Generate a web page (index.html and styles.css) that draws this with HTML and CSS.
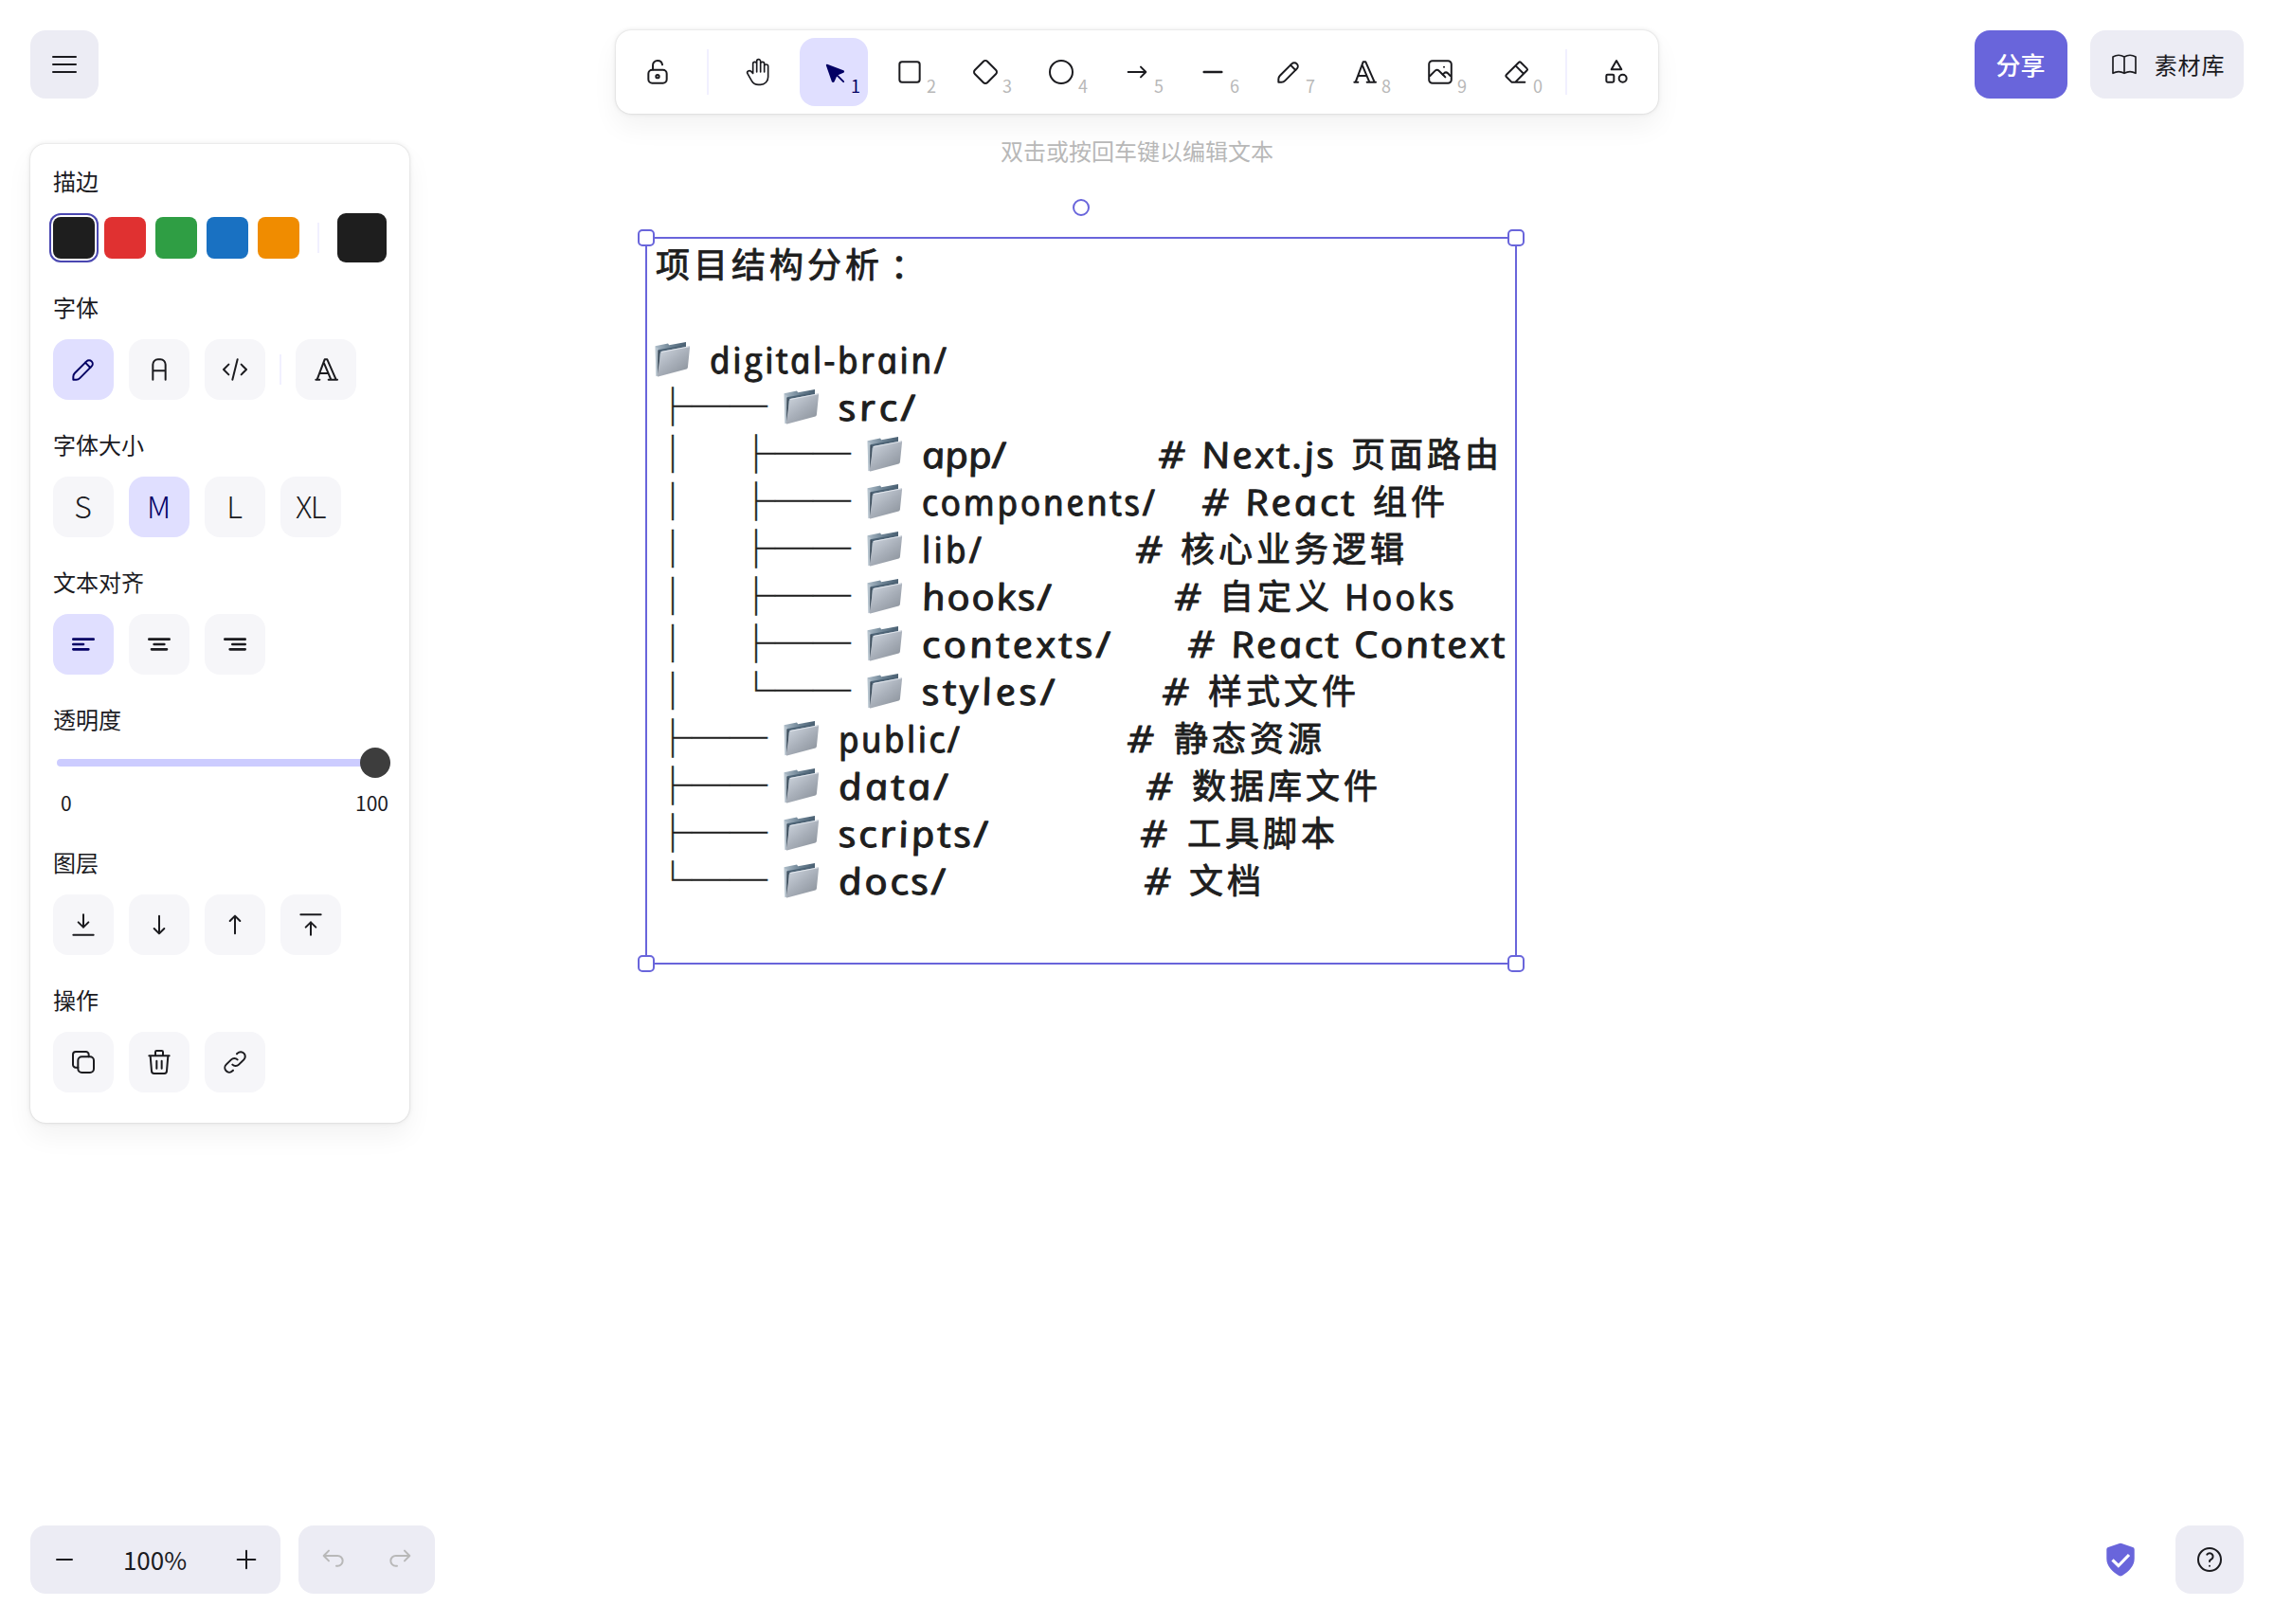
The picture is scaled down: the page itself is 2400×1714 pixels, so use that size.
FILE: index.html
```html
<!DOCTYPE html>
<html lang="zh-CN">
<head>
<meta charset="utf-8">
<title>Excalidraw</title>
<link rel="stylesheet" href="styles.css">
</head>
<body>
<svg class="canvas" viewBox="0 0 2400 1714">
  <defs>
    <linearGradient id="folder-front" x1="0" y1="0" x2="0.8" y2="1">
      <stop offset="0" stop-color="#d3dae3"/><stop offset="0.55" stop-color="#a9b0ba"/><stop offset="1" stop-color="#8c939c"/>
    </linearGradient>
    <linearGradient id="folder-back" x1="0" y1="0" x2="1" y2="0">
      <stop offset="0" stop-color="#aebdc9"/><stop offset="0.5" stop-color="#6d8394"/><stop offset="1" stop-color="#4a6072"/>
    </linearGradient>
    <symbol id="folder" viewBox="0 0 38 38" overflow="visible">
      <path d="M0.5 4.5 14 1.8l1.2 1.6L33 .2v5L6 34l-4.5 2.5Z" fill="url(#folder-back)"/>
      <path d="M1 5.5 3.6 7v28L1.8 36Z" fill="#b9c6d0"/>
      <path d="M3.4 8.5 33 3.2v3L5 12Z" fill="#4d6375"/>
      <path d="M3.4 9 5.5 10 4.5 34l-1.6 1Z" fill="#40505e"/>
      <path d="M6.3 11.6Q6.4 10.3 7.6 10L36 4.6q1.2-.2 1.1.9L34.9 27q-.1 1.2-1.3 1.6L3.6 36.6q-1 .2-.9-.9Z" fill="url(#folder-front)"/>
      <path d="M6.6 10.8 36.6 5" stroke="#e4e9ef" stroke-width=".9" fill="none"/>
    </symbol>
  </defs>

  <g class="cjk">
    <text x="692" y="293">项目结构分析</text>
    <text x="940" y="294">：</text>
    <text x="1426" y="493">页面路由</text>
    <text x="1449" y="543">组件</text>
    <text x="1246" y="593">核心业务逻辑</text>
    <text x="1287" y="643">自定义</text>
    <text x="1275" y="743">样式文件</text>
    <text x="1239" y="793">静态资源</text>
    <text x="1258" y="843">数据库文件</text>
    <text x="1253" y="893">工具脚本</text>
    <text x="1255" y="943">文档</text>
  </g>

  <g class="branch">
    <text x="690" y="444">├──</text>
    <text x="690" y="494">│</text><text x="778" y="494">├──</text>
    <text x="690" y="544">│</text><text x="778" y="544">├──</text>
    <text x="690" y="594">│</text><text x="778" y="594">├──</text>
    <text x="690" y="644">│</text><text x="778" y="644">├──</text>
    <text x="690" y="694">│</text><text x="778" y="694">├──</text>
    <text x="690" y="744">│</text><text x="778" y="744">└──</text>
    <text x="690" y="794">├──</text>
    <text x="690" y="844">├──</text>
    <text x="690" y="894">├──</text>
    <text x="690" y="944">└──</text>
  </g>

  <g transform="translate(0 0.8)">
    <use href="#folder" x="691" y="360" width="38" height="38"/>
    <use href="#folder" x="827" y="410" width="38" height="38"/>
    <use href="#folder" x="915" y="460" width="38" height="38"/>
    <use href="#folder" x="915" y="510" width="38" height="38"/>
    <use href="#folder" x="915" y="560" width="38" height="38"/>
    <use href="#folder" x="915" y="610" width="38" height="38"/>
    <use href="#folder" x="915" y="660" width="38" height="38"/>
    <use href="#folder" x="915" y="710" width="38" height="38"/>
    <use href="#folder" x="827" y="760" width="38" height="38"/>
    <use href="#folder" x="827" y="810" width="38" height="38"/>
    <use href="#folder" x="827" y="860" width="38" height="38"/>
    <use href="#folder" x="827" y="910" width="38" height="38"/>
  </g>

  <!-- Italic letterforms set upright: each label is skewed back around its own baseline -->
  <g class="latin" transform="translate(2 0)">
    <text transform="translate(749 394) skewX(12)" textLength="250">digital-brain/</text>
    <text transform="translate(885 444) skewX(12) scale(1.14 1)" textLength="71">src/</text>
    <text transform="translate(973 494) skewX(12) scale(1.14 1)" textLength="78">app/</text>
    <text transform="translate(973 544) skewX(12)" textLength="246">components/</text>
    <text transform="translate(973 594) skewX(12)" textLength="63">lib/</text>
    <text transform="translate(973 644) skewX(12) scale(1.14 1)" textLength="120">hooks/</text>
    <text transform="translate(973 694) skewX(12) scale(1.14 1)" textLength="174.5">contexts/</text>
    <text transform="translate(973 744) skewX(12) scale(1.14 1)" textLength="123">styles/</text>
    <text transform="translate(885 794) skewX(12)" textLength="128">public/</text>
    <text transform="translate(885 844) skewX(12) scale(1.14 1)" textLength="101.5">data/</text>
    <text transform="translate(885 894) skewX(12) scale(1.14 1)" textLength="138.500">scripts/</text>
    <text transform="translate(885 944) skewX(12) scale(1.14 1)" textLength="99">docs/</text>

    <text transform="translate(1268 494) skewX(12) scale(1.14 1)" textLength="123">Next.js</text>
    <text transform="translate(1314 544) skewX(12) scale(1.14 1)" textLength="101.500">React</text>
    <text transform="translate(1419 644) skewX(12)" textLength="116">Hooks</text>
    <text transform="translate(1299 694) skewX(12) scale(1.14 1)" textLength="254">React Context</text>
  </g>

  <g class="latin">
    <text x="1222" y="494" textLength="28" lengthAdjust="spacingAndGlyphs">#</text>
    <text x="1268" y="544" textLength="28" lengthAdjust="spacingAndGlyphs">#</text>
    <text x="1198" y="594" textLength="28" lengthAdjust="spacingAndGlyphs">#</text>
    <text x="1239" y="644" textLength="28" lengthAdjust="spacingAndGlyphs">#</text>
    <text x="1253" y="694" textLength="28" lengthAdjust="spacingAndGlyphs">#</text>
    <text x="1226" y="744" textLength="28" lengthAdjust="spacingAndGlyphs">#</text>
    <text x="1189" y="794" textLength="28" lengthAdjust="spacingAndGlyphs">#</text>
    <text x="1209" y="844" textLength="28" lengthAdjust="spacingAndGlyphs">#</text>
    <text x="1203" y="894" textLength="28" lengthAdjust="spacingAndGlyphs">#</text>
    <text x="1207" y="944" textLength="28" lengthAdjust="spacingAndGlyphs">#</text>
  </g>

  <g class="selection">
    <rect x="682" y="251" width="918" height="766"/>
    <rect class="handle" x="674" y="243" width="16" height="16" rx="4"/>
    <rect class="handle" x="1592" y="243" width="16" height="16" rx="4"/>
    <rect class="handle" x="674" y="1009" width="16" height="16" rx="4"/>
    <rect class="handle" x="1592" y="1009" width="16" height="16" rx="4"/>
    <circle class="handle" cx="1141" cy="219" r="8"/>
  </g>
</svg>

<div class="app">
  <main class="top">
    <div class="left">
      <button class="square" aria-label="菜单"><svg class="i20" viewBox="0 0 20 20"><path d="M2.5 5h15M2.5 10h15M2.5 15h15"/></svg></button>

      <aside class="panel">
        <section>
          <h3>描边</h3>
          <div class="swatches">
            <i class="swatch black active"></i><i class="swatch red"></i><i class="swatch green"></i><i class="swatch blue"></i><i class="swatch orange"></i>
            <i class="rule"></i><i class="swatch black current"></i>
          </div>
        </section>
        <section>
          <h3>字体</h3>
          <div class="buttons">
            <button class="tile active"><svg class="i20" viewBox="0 0 20 20"><path d="m7.643 15.69 7.774-7.773a2.357 2.357 0 1 0-3.334-3.334L4.31 12.357a3.333 3.333 0 0 0-.977 2.357v1.953h1.953c.884 0 1.732-.352 2.357-.977Z"/><path d="m11.25 5.417 3.333 3.333"/></svg></button>
            <button class="tile"><svg class="i20" viewBox="0 0 20 20"><path d="M5.833 16.667v-10a3.333 3.333 0 0 1 3.334-3.334h1.666a3.333 3.333 0 0 1 3.334 3.334v10M5.833 10.833h8.334"/></svg></button>
            <button class="tile"><svg class="i20" viewBox="0 0 20 20"><path d="M5.833 6.667 2.5 10l3.333 3.333M14.167 6.667 17.5 10l-3.333 3.333M11.667 3.333 8.333 16.667"/></svg></button>
            <i class="rule"></i>
            <button class="tile"><svg class="i24" viewBox="0 0 24 24"><path d="M4 20h3M14 20h7M6.9 15h6.9M10.2 6.3 16 20M5 20l6-16h2l7 16"/></svg></button>
          </div>
        </section>
        <section>
          <h3>字体大小</h3>
          <div class="buttons">
            <button class="tile size">S</button><button class="tile size active">M</button><button class="tile size">L</button><button class="tile size wide">XL</button>
          </div>
        </section>
        <section>
          <h3>文本对齐</h3>
          <div class="buttons">
            <button class="tile active"><svg class="bold" viewBox="0 0 24 24"><path d="M4 8h16M4 12h8M4 16h12"/></svg></button>
            <button class="tile"><svg class="bold" viewBox="0 0 24 24"><path d="M4 8h16M8 12h8M6 16h12"/></svg></button>
            <button class="tile"><svg class="bold" viewBox="0 0 24 24"><path d="M4 8h16M10 12h10M8 16h12"/></svg></button>
          </div>
        </section>
        <section>
          <h3>透明度</h3>
          <div class="slider">
            <div class="track"><i class="thumb"></i></div>
            <div class="ends"><span>0</span><span>100</span></div>
          </div>
        </section>
        <section>
          <h3>图层</h3>
          <div class="buttons">
            <button class="tile"><svg class="i24" viewBox="0 0 24 24"><path d="M4 20h16M12 4v10M8 10l4 4 4-4"/></svg></button>
            <button class="tile"><svg class="i24" viewBox="0 0 24 24"><path d="M12 5v14M8 15l4 4 4-4"/></svg></button>
            <button class="tile"><svg class="i24" viewBox="0 0 24 24"><path d="M12 5v14M8 9l4-4 4 4"/></svg></button>
            <button class="tile"><svg class="i24" viewBox="0 0 24 24"><path d="M4 4h16M12 10v10M8 14l4-4 4 4"/></svg></button>
          </div>
        </section>
        <section>
          <h3>操作</h3>
          <div class="buttons">
            <button class="tile"><svg class="i20" viewBox="0 0 20 20"><path d="M14.375 6.458H8.958a2.5 2.5 0 0 0-2.5 2.5v5.417a2.5 2.5 0 0 0 2.5 2.5h5.417a2.5 2.5 0 0 0 2.5-2.5V8.958a2.5 2.5 0 0 0-2.5-2.5Z"/><path d="M13.542 6.458V5a1.875 1.875 0 0 0-1.875-1.875H5A1.875 1.875 0 0 0 3.125 5v6.667A1.875 1.875 0 0 0 5 13.542h1.458"/></svg></button>
            <button class="tile"><svg class="i20" viewBox="0 0 20 20"><path d="M3.333 5.833h13.334M8.333 9.167v5M11.667 9.167v5M4.167 5.833l.833 10c0 .92.746 1.667 1.667 1.667h6.666c.92 0 1.667-.746 1.667-1.667l.833-10M7.5 5.833v-2.5c0-.46.373-.833.833-.833h3.334c.46 0 .833.373.833.833v2.5"/></svg></button>
            <button class="tile"><svg class="i20" viewBox="0 0 20 20"><path d="M8.333 11.667a2.917 2.917 0 0 0 4.167 0l3.333-3.334a2.946 2.946 0 1 0-4.166-4.166l-.417.416"/><path d="M11.667 8.333a2.917 2.917 0 0 0-4.167 0l-3.333 3.334a2.946 2.946 0 0 0 4.166 4.166l.417-.416"/></svg></button>
          </div>
        </section>
      </aside>
    </div>

    <div class="middle">
      <nav class="toolbar">
        <button class="tool"><svg class="i20" viewBox="0 0 20 20"><path d="M13.542 8.542H6.458a2.5 2.5 0 0 0-2.5 2.5v3.75a2.5 2.5 0 0 0 2.5 2.5h7.084a2.5 2.5 0 0 0 2.5-2.5v-3.75a2.5 2.5 0 0 0-2.5-2.5Z"/><circle cx="10" cy="12.917" r="1.042"/><path d="M6.9 8.4V5.417C6.9 3.806 8.159 2.5 10 2.5c1.7 0 2.9 1.1 3.15 2.7"/></svg></button>
        <i class="rule"></i>
        <button class="tool"><svg class="thin" viewBox="0 0 24 24"><path d="M8 13V5.5a1.5 1.5 0 0 1 3 0V12M11 5.5v-2a1.5 1.5 0 1 1 3 0V12M14 5.5a1.5 1.5 0 0 1 3 0V12M17 7.5a1.5 1.5 0 0 1 3 0V16a6 6 0 0 1-6 6h-2 .208a6 6 0 0 1-5.012-2.7L7 19c-.312-.479-1.407-2.388-3.286-5.728a1.5 1.5 0 0 1 .536-2.022 1.867 1.867 0 0 1 2.28.28L8 13"/></svg></button>
        <button class="tool active"><svg class="thin" viewBox="0 0 22 22"><path fill="currentColor" d="m6 6 4.153 11.793a.365.365 0 0 0 .331.207.366.366 0 0 0 .332-.207L13 13l4.787-1.994a.355.355 0 0 0 .213-.323.355.355 0 0 0-.213-.323L6 6Z"/><path d="m13.5 13.5 4.5 4.5"/></svg><kbd>1</kbd></button>
        <button class="tool"><svg class="i24" viewBox="0 0 24 24"><rect x="4" y="4" width="16" height="16" rx="2"/></svg><kbd>2</kbd></button>
        <button class="tool"><svg class="i24" viewBox="0 0 24 24"><path d="m10.5 20.4-6.9-6.9c-.781-.781-.781-2.219 0-3l6.9-6.9c.781-.781 2.219-.781 3 0l6.9 6.9c.781.781.781 2.219 0 3l-6.9 6.9c-.781.781-2.219.781-3 0Z"/></svg><kbd>3</kbd></button>
        <button class="tool"><svg class="i24" viewBox="0 0 24 24"><circle cx="12" cy="12" r="9"/></svg><kbd>4</kbd></button>
        <button class="tool"><svg class="i24" viewBox="0 0 24 24"><path d="M5 12h14M15 16l4-4M15 8l4 4"/></svg><kbd>5</kbd></button>
        <button class="tool"><svg class="i24" viewBox="0 0 20 20"><path d="M4.167 10h11.666"/></svg><kbd>6</kbd></button>
        <button class="tool"><svg class="i20" viewBox="0 0 20 20"><path d="m7.643 15.69 7.774-7.773a2.357 2.357 0 1 0-3.334-3.334L4.31 12.357a3.333 3.333 0 0 0-.977 2.357v1.953h1.953c.884 0 1.732-.352 2.357-.977Z"/><path d="m11.25 5.417 3.333 3.333"/></svg><kbd>7</kbd></button>
        <button class="tool"><svg class="i24" viewBox="0 0 24 24"><path d="M4 20h3M14 20h7M6.9 15h6.9M10.2 6.3 16 20M5 20l6-16h2l7 16"/></svg><kbd>8</kbd></button>
        <button class="tool"><svg class="i20" viewBox="0 0 20 20"><path d="M12.5 6.667h.01M4.91 2.625h10.18a2.284 2.284 0 0 1 2.285 2.284v10.182a2.284 2.284 0 0 1-2.284 2.284H4.909a2.284 2.284 0 0 1-2.284-2.284V4.909a2.284 2.284 0 0 1 2.284-2.284Z"/><path d="m3.333 12.5 3.334-3.333c.773-.745 1.726-.745 2.5 0l4.166 4.166"/><path d="m11.667 11.667.833-.834c.774-.744 1.726-.744 2.5 0l1.667 1.667"/></svg><kbd>9</kbd></button>
        <button class="tool"><svg class="i24" viewBox="0 0 24 24"><path d="M19 20H8.5l-4.21-4.3a1 1 0 0 1 0-1.41l10-10a1 1 0 0 1 1.41 0l5 5a1 1 0 0 1 0 1.41L11.5 20M18 13.3 11.7 7"/></svg><kbd>0</kbd></button>
        <i class="rule"></i>
        <button class="tool"><svg class="i24" viewBox="0 0 24 24"><path d="m12 3-4 7h8Z"/><circle cx="17" cy="17" r="3"/><rect x="4" y="14" width="6" height="6" rx="1"/></svg></button>
      </nav>
      <p class="hint">双击或按回车键以编辑文本</p>
    </div>

    <div class="right">
      <button class="share">分享</button>
      <button class="library"><svg class="thin" viewBox="0 0 24 24"><path d="M3 19a9 9 0 0 1 9 0 9 9 0 0 1 9 0M3 6a9 9 0 0 1 9 0 9 9 0 0 1 9 0M3 6v13M12 6v13M21 6v13"/></svg><span>素材库</span></button>
    </div>
  </main>

  <footer class="bottom">
    <div class="group zoom">
      <button class="step"><svg class="i20" viewBox="0 0 20 20"><path d="M5 10h10"/></svg></button>
      <span class="percent">100%</span>
      <button class="step"><svg class="i20" viewBox="0 0 20 20"><path d="M10 4.167v11.666M4.167 10h11.666"/></svg></button>
    </div>
    <div class="group history">
      <button class="step"><svg class="i20" viewBox="0 0 20 20"><path d="M7.5 10.833 4.167 7.5 7.5 4.167M4.167 7.5h9.166a3.333 3.333 0 0 1 0 6.667H12.5"/></svg></button>
      <button class="step"><svg class="i20" viewBox="0 0 20 20"><path d="M12.5 10.833 15.833 7.5 12.5 4.167M15.833 7.5H6.667a3.333 3.333 0 1 0 0 6.667H7.5"/></svg></button>
    </div>
    <div class="shield"><svg viewBox="0 0 30 36"><path fill="#6965db" d="M13.8.9q1.2-.5 2.4 0L28 5q1.7.6 1.7 2.3V17c0 8-6 13.6-13 18q-1.7.9-3.4 0C6.3 30.6.3 25 .3 17V7.3Q.3 5.6 2 5Z"/><path d="m6.5 18.3 6.3 6.2L24 13" fill="none" stroke="#fff" stroke-width="3.2"/></svg></div>
    <button class="square" aria-label="帮助"><svg class="i24" viewBox="0 0 24 24"><circle cx="12" cy="12" r="9"/><path d="M12 17v.01M12 13.5a1.5 1.5 0 0 1 1-1.5 2.6 2.6 0 1 0-3-4"/></svg></button>
  </footer>
</div>
</body>
</html>
```
FILE: styles.css
```css
* { box-sizing: border-box; }

body {
  margin: 0;
  height: 1714px;
  overflow: hidden;
  background: #fff;
  color: #1b1b1f;
  font-family: "Noto Sans CJK SC", "Noto Sans", sans-serif;
  font-size: 24px;
}

button {
  display: flex;
  align-items: center;
  justify-content: center;
  flex: none;
  margin: 0;
  padding: 0;
  border: 0;
  background: none;
  color: inherit;
  font: inherit;
}

h3, p { margin: 0; font-weight: 400; }

button svg {
  width: 32px;
  height: 32px;
  fill: none;
  stroke: currentColor;
  stroke-linecap: round;
  stroke-linejoin: round;
}
.i20, .thin { stroke-width: 1.25; }
.i24 { stroke-width: 1.5; }
.bold { stroke-width: 2; }

/* Drawing surface */
.canvas {
  position: absolute;
  top: 0;
  left: 0;
  width: 2400px;
  height: 1714px;
}
.canvas text { fill: #1e1e1e; white-space: pre; }
.cjk text {
  font: 400 36px "Noto Sans CJK SC", sans-serif;
  letter-spacing: 4px;
  stroke: #1e1e1e;
  stroke-width: 0.9;
  stroke-linejoin: round;
}
.branch text {
  font: 400 40px "Noto Sans CJK SC", sans-serif;
  stroke: #1e1e1e;
  stroke-width: 0.5;
}
.latin text {
  font: italic 400 38px "Open Sans", "Noto Sans", sans-serif;
  stroke: #1e1e1e;
  stroke-width: 1;
  stroke-linejoin: round;
}
.selection rect, .selection circle {
  fill: none;
  stroke: #6965db;
  stroke-width: 2;
}
.selection .handle { fill: #fff; }

/* Interface layer */
.app {
  position: relative;
  display: flex;
  flex-direction: column;
  justify-content: space-between;
  height: 1714px;
  padding: 32px;
}
.top {
  display: grid;
  grid-template-columns: 1fr auto 1fr;
  align-items: start;
}
.left { display: flex; flex-direction: column; gap: 48px; }

.square {
  width: 72px;
  height: 72px;
  border-radius: 16px;
  background: #ececf4;
}

.panel, .toolbar {
  border-radius: 16px;
  background: #fff;
  box-shadow: 0 0 2px rgba(0, 0, 0, 0.17), 0 0 6px rgba(0, 0, 0, 0.08), 0 14px 28px rgba(0, 0, 0, 0.05);
}
.panel {
  display: flex;
  flex-direction: column;
  gap: 31px;
  width: 400px;
  padding: 23px 24px 32px;
}
.panel section { display: flex; flex-direction: column; gap: 16px; }
.panel h3 { padding-bottom: 2px; font-size: 24px; line-height: 32px; }

.swatches { display: flex; align-items: center; gap: 10px; height: 52px; }
.swatch { width: 44px; height: 44px; border-radius: 8px; }
.swatch.active { box-shadow: 0 0 0 2px #fff, 0 0 0 4px #4a47b1; }
.black { background: #1e1e1e; }
.red { background: #e03131; }
.green { background: #2f9e44; }
.blue { background: #1971c2; }
.orange { background: #f08c00; }
.current { width: 52px; height: 52px; border-radius: 9px; }
.rule { flex: none; width: 2px; height: 32px; background: #f1f0ff; }
.swatches .rule { margin: 0 9px; }

.buttons { display: flex; align-items: center; gap: 16px; }
.buttons .rule { margin: 0 -1px; }
.tile {
  width: 64px;
  height: 64px;
  border-radius: 16px;
  background: #f6f6f9;
}
.active.tile, .active.tool { background: #e0dfff; color: #030064; }
.size { padding: 0 1px 3px 0; font-size: 32px; font-weight: 300; line-height: 61px; }
.wide { letter-spacing: -1.5px; }

.slider { height: 70px; padding-top: 8px; }
.track {
  display: flex;
  align-items: center;
  justify-content: flex-end;
  width: 352px;
  height: 8px;
  margin-left: 4px;
  border-radius: 4px;
  background: #ccccff;
}
.thumb { flex: none; width: 32px; height: 32px; border-radius: 50%; background: #3d3d3d; }
.ends {
  display: flex;
  justify-content: space-between;
  width: 346px;
  margin: 22px 0 0 8px;
  font-size: 21px;
  line-height: 32px;
}

.toolbar { display: flex; align-items: center; gap: 8px; height: 88px; padding: 8px; }
.toolbar .rule { height: 48px; margin: 0 8px; }
.tool { position: relative; width: 72px; height: 72px; border-radius: 16px; }
.tool kbd {
  position: absolute;
  right: 8px;
  bottom: 10px;
  color: #b8b8b8;
  font: 18px/24px "Noto Sans CJK SC", sans-serif;
}
.tool.active kbd { color: #030064; }
.hint {
  margin-top: 23px;
  color: #b8b8b8;
  line-height: 32px;
  text-align: center;
}

.right { display: flex; justify-content: flex-end; gap: 24px; }
.share {
  width: 98px;
  height: 72px;
  padding: 0 1px 2px 0;
  border-radius: 16px;
  background: #6965db;
  color: #fff;
  font-size: 26px;
  font-weight: 500;
}
.library {
  gap: 16px;
  width: 162px;
  height: 72px;
  border-radius: 16px;
  background: #ececf4;
  letter-spacing: 0.8px;
}
.library span { padding-bottom: 2px; }

.bottom { display: flex; align-items: center; }
.group { display: flex; align-items: center; height: 72px; border-radius: 16px; background: #ececf4; }
.step { width: 72px; height: 72px; }
.percent { width: 120px; padding: 0 1px 2px 0; font-size: 26px; text-align: center; }
.history { margin-left: 19px; color: #b8b8b8; }
.shield { margin: 0 43px 0 auto; height: 36px; }
.shield svg { display: block; width: 30px; height: 36px; }
```
